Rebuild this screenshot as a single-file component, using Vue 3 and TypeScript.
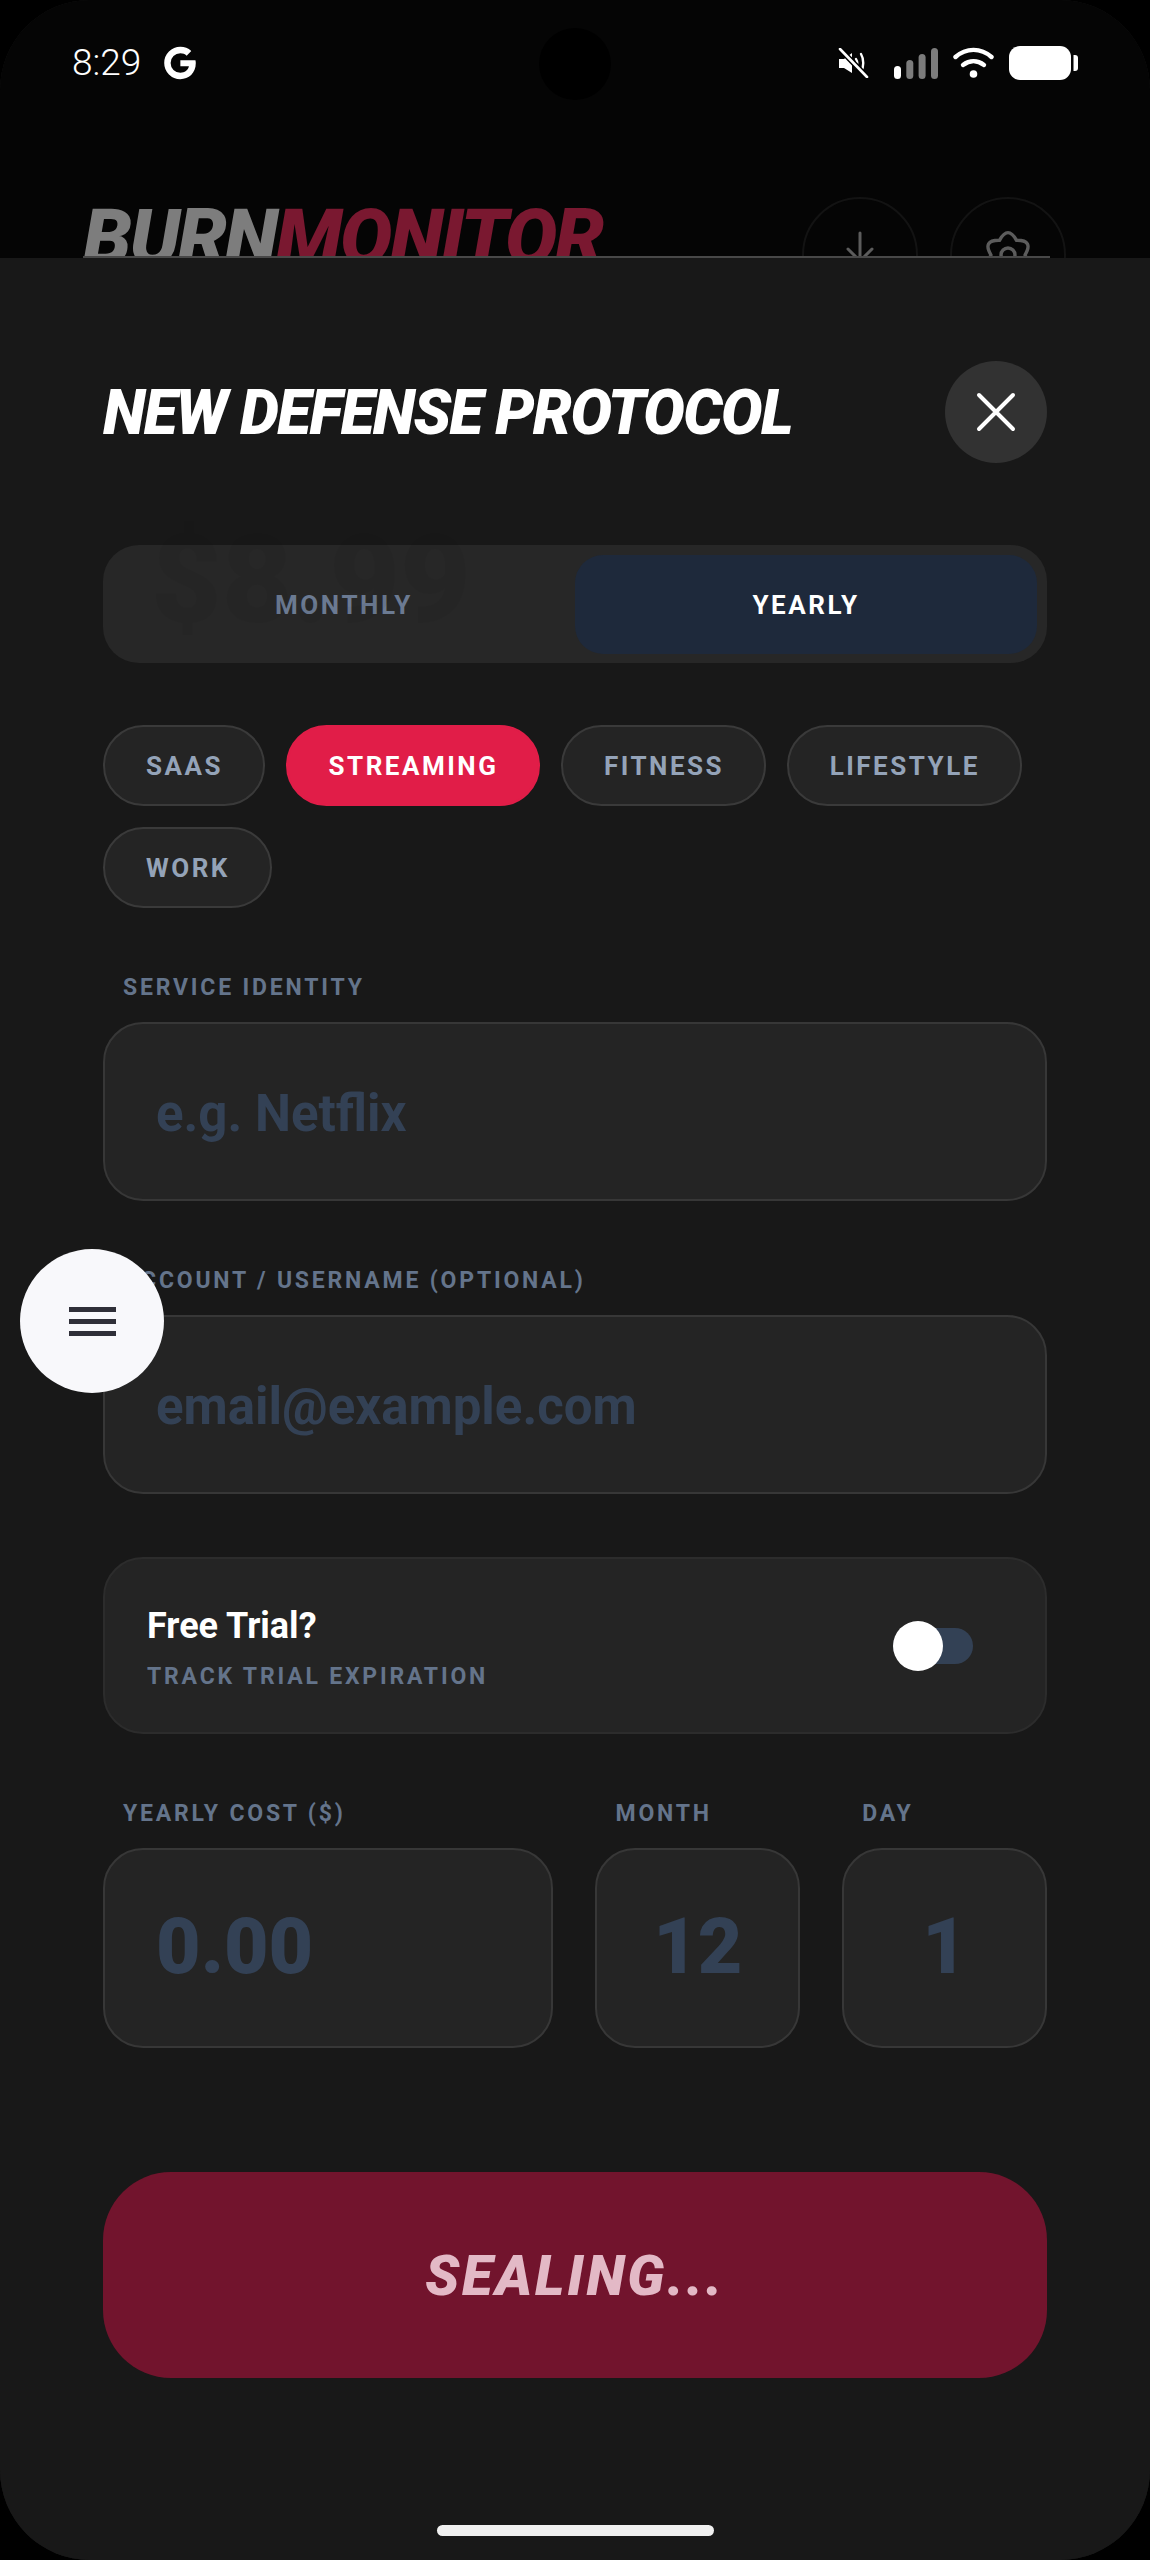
<template>
  <div class="screen">
    <div class="backdrop">
      <div class="status-bar">
        <div class="status-left">
          <span class="time">8:29</span>
          <svg class="g-icon" viewBox="0 0 32 32" width="38" height="38">
            <path d="M29 13.6H16.3v5.2h7.2c-.7 3.4-3.6 5.4-7.2 5.4a8.2 8.2 0 0 1 0-16.4c2 0 3.900.7 5.300 2l3.900-3.900A13.700 13.700 0 0 0 16.300 2.400a13.600 13.600 0 1 0 0 27.200c7 0 13-5 13-13.600 0-.8-.1-1.600-.3-2.400z" fill="#fff" />
          </svg>
        </div>
        <div class="camera"></div>
        <div class="status-right">
          <svg viewBox="0 0 31 30" width="31" height="30" fill="none" stroke="#fff">
            <path d="M1 11h5l8-6v20l-8-5H1z" fill="#fff" stroke="none" />
            <path d="M18 11c1.500 2.500 1.500 6 0 8.500M23 6c3 5 3 13 0 18" stroke-width="2.400" stroke-linecap="round" />
            <path d="M2 1l27 28" stroke="#000" stroke-width="5.600" />
            <path d="M2 1l27 28" stroke-width="2.600" stroke-linecap="round" />
          </svg>
          <svg class="signal" viewBox="0 0 44 32" width="44" height="32">
            <rect x="0" y="19" width="7" height="13" rx="3.500" fill="#fff" />
            <rect x="12.300" y="13" width="7" height="19" rx="3.500" fill="#7c7c7c" />
            <rect x="24.600" y="7" width="7" height="25" rx="3.500" fill="#7c7c7c" />
            <rect x="37" y="1" width="7" height="31" rx="3.500" fill="#7c7c7c" />
          </svg>
          <svg viewBox="0 0 41 32" width="41" height="32" fill="none" stroke="#fff" stroke-width="4.400" stroke-linecap="round">
            <path d="M2.500 10c10.500-9.500 25.500-9.500 36 0" />
            <path d="M10 18c6.500-5 14.500-5 21 0" />
            <circle cx="20.500" cy="27" r="3.800" fill="#fff" stroke="none" />
          </svg>
          <svg viewBox="0 0 69 34" width="69" height="34">
            <rect x="0" y="0" width="62" height="34" rx="11" fill="#fff" />
            <path d="M64.500 9h1.500a3 3 0 0 1 3 3v10a3 3 0 0 1-3 3h-1.500z" fill="#fff" />
          </svg>
        </div>
      </div>
      <div class="app-header">
        <div class="logo"><span class="logo-burn">BURN</span><span class="logo-monitor">MONITOR</span></div>
        <div class="header-actions">
          <div class="round-btn">
            <svg viewBox="0 0 60 60" width="60" height="60" fill="none" stroke="#5c5c5c" stroke-width="3" stroke-linecap="round" stroke-linejoin="round">
              <path d="M30 8v28M18 24l12 12 12-12" />
            </svg>
          </div>
          <div class="round-btn">
            <svg viewBox="0 0 60 60" width="60" height="60" fill="none" stroke="#5c5c5c" stroke-width="3.400" stroke-linejoin="round">
              <path d="M21.500 15.300Q30 0 38.500 15.300Q56 15 47 30Q56 45 38.500 44.700Q30 60 21.500 44.700Q4 45 13 30Q4 15 21.500 15.300z" />
              <circle cx="30" cy="30" r="7" />
            </svg>
          </div>
        </div>
      </div>
    </div>

    <section class="sheet">
      <div class="sheet-edge"></div>
      <div class="sheet-head">
        <h2 class="sheet-title">NEW DEFENSE PROTOCOL</h2>
        <button class="close-btn" type="button">
          <svg viewBox="0 0 40 40" width="40" height="40" fill="none" stroke="#fff" stroke-width="4" stroke-linecap="round">
            <path d="M3 3l34 34M37 3L3 37" />
          </svg>
        </button>
      </div>

      <div class="cycle">
        <div v-for="c in cycles" :key="c" class="cycle-opt" :class="{ active: c === cycle }">{{ c }}</div>
        <div class="ghost-price">$8.99</div>
      </div>

      <div class="chips">
        <span v-for="c in categories" :key="c" class="chip" :class="{ active: c === category }">{{ c }}</span>
      </div>

      <div class="field first">
        <label class="field-label">SERVICE IDENTITY</label>
        <div class="input text-input"><span class="placeholder">e.g. Netflix</span></div>
      </div>

      <div class="field second">
        <label class="field-label">ACCOUNT / USERNAME (OPTIONAL)</label>
        <div class="input text-input"><span class="placeholder">email@example.com</span></div>
      </div>

      <div class="trial">
        <div class="trial-text">
          <div class="trial-title">Free Trial?</div>
          <div class="trial-sub">TRACK TRIAL EXPIRATION</div>
        </div>
        <div class="switch"><div class="knob"></div></div>
      </div>

      <div class="cost-row">
        <div class="field">
          <label class="field-label">YEARLY COST ($)</label>
          <div class="input num-input"><span class="num-placeholder">0.00</span></div>
        </div>
        <div class="field">
          <label class="field-label">MONTH</label>
          <div class="input num-input centered"><span class="num-placeholder">12</span></div>
        </div>
        <div class="field">
          <label class="field-label">DAY</label>
          <div class="input num-input centered"><span class="num-placeholder">1</span></div>
        </div>
      </div>

      <button class="seal-btn" type="button">SEALING...</button>
    </section>

    <button class="fab" type="button">
      <span></span><span></span><span></span>
    </button>
    <div class="home-bar"></div>
  </div>
</template>

<script setup lang="ts">
const cycles = ['MONTHLY', 'YEARLY']
const cycle = 'YEARLY'
const categories = ['SAAS', 'STREAMING', 'FITNESS', 'LIFESTYLE', 'WORK']
const category = 'STREAMING'
</script>

<style>
html, body {
  margin: 0;
  background: #000;
}
</style>

<style scoped>
.screen {
  position: relative;
  width: 1150px;
  height: 2560px;
  overflow: hidden;
  background: #181818;
  border-radius: 90px;
  font-family: Roboto, "Liberation Sans", sans-serif;
  display: flex;
  flex-direction: column;
}

.backdrop {
  height: 258px;
  flex: none;
  background: #050505;
  overflow: hidden;
}

.status-bar {
  height: 125px;
  padding: 0 72px;
  position: relative;
  display: flex;
  justify-content: space-between;
  align-items: center;
  box-sizing: border-box;
}

.status-left {
  display: flex;
  align-items: center;
  gap: 20px;
}

.time {
  color: #fff;
  font-size: 37px;
  font-weight: 300;
}

.camera {
  position: absolute;
  left: 539px;
  top: 28px;
  width: 72px;
  height: 72px;
  border-radius: 50%;
  background: #000;
}

.status-right {
  display: flex;
  align-items: center;
  gap: 15px;
}

.signal {
  margin-left: 10px;
}

.app-header {
  display: flex;
  justify-content: space-between;
  align-items: flex-start;
  padding: 0 84px 0 83px;
  height: 133px;
}

.logo {
  font-size: 78px;
  font-weight: 900;
  font-style: italic;
  letter-spacing: -2.2px;
  margin-top: 73px;
  line-height: 80px;
}

.logo-burn {
  color: #7d7d7d;
}

.logo-monitor {
  color: #7a1830;
}

.header-actions {
  display: flex;
  gap: 32px;
  margin-top: 72px;
}

.round-btn {
  width: 116px;
  height: 116px;
  border-radius: 50%;
  border: 2px solid #131313;
  box-sizing: border-box;
  display: flex;
  align-items: center;
  justify-content: center;
}

.sheet {
  position: relative;
  flex: 1;
  padding: 103px 103px 0;
  background: #181818;
}

.sheet-edge {
  position: absolute;
  top: -2px;
  left: 83px;
  right: 100px;
  height: 2px;
  background: #484848;
}

.sheet-head {
  display: flex;
  justify-content: space-between;
  align-items: center;
  height: 102px;
}

.sheet-title {
  margin: 0;
  color: #fff;
  font-size: 62px;
  font-weight: 900;
  font-style: italic;
  letter-spacing: -1.6px;
}

.close-btn {
  width: 102px;
  height: 102px;
  padding: 0;
  border: none;
  border-radius: 50%;
  background: #323232;
  display: flex;
  align-items: center;
  justify-content: center;
}

.cycle {
  position: relative;
  margin-top: 82px;
  height: 118px;
  padding: 10px 10px 9px;
  box-sizing: border-box;
  border-radius: 36px;
  background: #272727;
  display: grid;
  grid-template-columns: 1fr 1fr;
}

/* price of the page behind, it barely shows through the sheet */
.ghost-price {
  position: absolute;
  left: 48px;
  top: -36px;
  font-size: 122px;
  font-weight: 900;
  color: rgba(0, 0, 0, 0.035);
}

.cycle-opt {
  position: relative;
  border-radius: 28px;
  display: flex;
  align-items: center;
  justify-content: center;
  font-size: 26px;
  font-weight: 700;
  letter-spacing: 2.6px;
  color: #6b7a92;
}

.cycle-opt.active {
  background: #1e293b;
  color: #fff;
}

.chips {
  display: flex;
  flex-wrap: wrap;
  gap: 21px 20.6px;
  margin-top: 62px;
}

.chip {
  height: 81px;
  padding: 0 40px 0 41px;
  box-sizing: border-box;
  border: 2px solid #3a3a3a;
  border-radius: 41px;
  background: #242424;
  display: flex;
  align-items: center;
  font-size: 26px;
  font-weight: 700;
  letter-spacing: 2.5px;
  color: #94a3b8;
}

.chip.active {
  background: #e11d48;
  border-color: #e11d48;
  color: #fff;
}

.field {
  display: flex;
  flex-direction: column;
  min-width: 0;
}

.field.first {
  margin-top: 61px;
}

.field.second {
  margin-top: 61px;
}

.field-label {
  height: 36px;
  padding-left: 20px;
  display: flex;
  align-items: center;
  font-size: 23px;
  font-weight: 700;
  letter-spacing: 2.8px;
  color: #64748b;
  white-space: nowrap;
}

.input {
  margin-top: 17px;
  box-sizing: border-box;
  border: 2px solid #373737;
  border-radius: 40px;
  background: #242424;
  display: flex;
  align-items: center;
}

.text-input {
  height: 179px;
  padding: 4px 0 0 51px;
}

.placeholder {
  font-size: 51px;
  font-weight: 700;
  color: #334155;
}

.trial {
  margin-top: 63px;
  height: 177px;
  box-sizing: border-box;
  padding: 0 72px 0 42px;
  border: 2px solid #2c2c2c;
  border-radius: 40px;
  background: #242424;
  display: flex;
  justify-content: space-between;
  align-items: center;
}

.trial-text {
  padding-top: 3px;
}

.trial-title {
  color: #fff;
  font-size: 36px;
  font-weight: 700;
}

.trial-sub {
  margin-top: 16px;
  color: #64748b;
  font-size: 23px;
  font-weight: 700;
  letter-spacing: 2.8px;
}

.switch {
  position: relative;
  width: 80px;
  height: 36px;
  border-radius: 18px;
  background: #334155;
}

.knob {
  position: absolute;
  left: 0;
  top: -7px;
  width: 50px;
  height: 50px;
  border-radius: 50%;
  background: #fff;
}

.cost-row {
  margin-top: 61px;
  display: grid;
  grid-template-columns: 2.2fr 1fr 1fr;
  gap: 42px;
}

.num-input {
  height: 200px;
  padding: 0 0 2px 51px;
}

.num-input.centered {
  padding-left: 0;
  justify-content: center;
}

.num-placeholder {
  font-size: 77px;
  font-weight: 900;
  color: #334155;
}

.seal-btn {
  display: block;
  width: 100%;
  margin-top: 124px;
  height: 206px;
  padding: 2px 0 0;
  border: none;
  border-radius: 68px;
  background: #72142d;
  color: #e3b9c6;
  font-family: inherit;
  font-size: 56px;
  font-weight: 900;
  font-style: italic;
  letter-spacing: 2.8px;
}

.fab {
  position: absolute;
  left: 20px;
  top: 1249px;
  width: 144px;
  height: 144px;
  padding: 0;
  border: none;
  border-radius: 50%;
  background: #f8f8fb;
  display: flex;
  flex-direction: column;
  align-items: center;
  justify-content: center;
  gap: 7px;
}

.fab span {
  width: 47px;
  height: 5px;
  background: #2f2f38;
}

.home-bar {
  position: absolute;
  left: 437px;
  top: 2525px;
  width: 277px;
  height: 11px;
  border-radius: 6px;
  background: #f0f0f0;
}
</style>
